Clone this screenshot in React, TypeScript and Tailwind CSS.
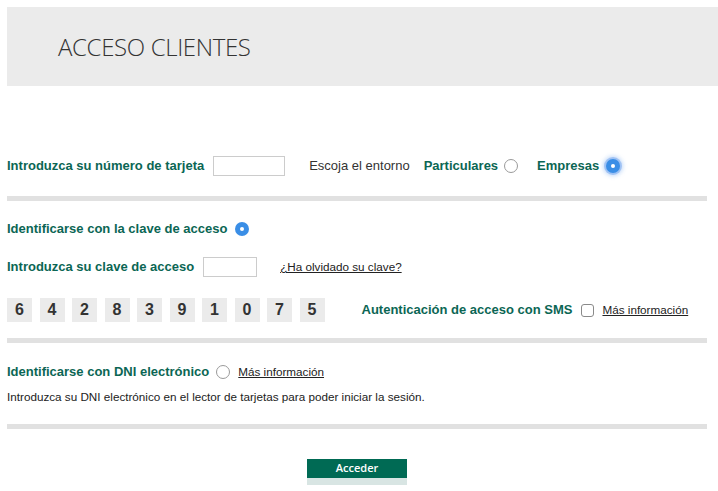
const green = "text-[#0b6654]";

function Radio({ checked, glow }: { checked?: boolean; glow?: boolean }) {
  if (checked) {
    return (
      <span
        className={`flex h-[14px] w-[14px] shrink-0 items-center justify-center rounded-full bg-[#3a8ee6] ${
          glow ? "shadow-[0_0_0_2px_rgba(120,170,240,0.55),0_0_4px_3px_rgba(120,170,240,0.45)]" : ""
        }`}
      >
        <span className="block h-[4px] w-[4px] rounded-full bg-white" />
      </span>
    );
  }
  return <span className="block h-[14px] w-[14px] shrink-0 rounded-full border border-[#9a9a9a] bg-white" />;
}

function Separator({ className = "" }: { className?: string }) {
  return <div className={`h-[5px] w-[700px] bg-[#e1e1e1] ${className}`} />;
}

const digits = ["6", "4", "2", "8", "3", "9", "1", "0", "7", "5"];

export default function App() {
  return (
    <div className="min-h-screen bg-white pl-[7px] pt-[7px] font-['Liberation_Sans',Arial,sans-serif] text-[#222]">
      {/* cabecera */}
      <div className="flex h-[79px] w-[711px] items-center bg-[#ebebeb] pl-[51px]">
        <h1 className="font-['Open_Sans',sans-serif] text-[24px] font-light tracking-[-0.35px] text-[#333]">
          ACCESO CLIENTES
        </h1>
      </div>

      <div className="w-[700px] text-[13px]">
        {/* tarjeta + entorno */}
        <div className="mt-[70px] flex h-[20px] items-center">
          <span className={`font-bold ${green}`}>Introduzca su número de tarjeta</span>
          <input className="ml-[9px] h-[20px] w-[72px] border border-[#cccccc] bg-white outline-none" />
          <span className="ml-[24px] text-[#333]">Escoja el entorno</span>
          <span className={`ml-[14px] font-bold ${green}`}>Particulares</span>
          <span className="ml-[6px] block">
            <Radio />
          </span>
          <span className={`ml-[19px] font-bold ${green}`}>Empresas</span>
          <span className="ml-[7px] block">
            <Radio checked glow />
          </span>
        </div>

        <Separator className="mt-[20px]" />

        {/* clave de acceso */}
        <div className="mt-[20px] flex h-[16px] items-center">
          <span className={`font-bold ${green}`}>Identificarse con la clave de acceso</span>
          <span className="ml-[8px] block">
            <Radio checked />
          </span>
        </div>

        <div className="mt-[20px] flex h-[20px] items-center">
          <span className={`font-bold ${green}`}>Introduzca su clave de acceso</span>
          <input className="ml-[9px] h-[20px] w-[54px] border border-[#cccccc] bg-white outline-none" />
          <a className="ml-[23px] text-[11.7px] text-[#222] underline">¿Ha olvidado su clave?</a>
        </div>

        <div className="mt-[21px] flex h-[24px] items-center">
          <div className="flex gap-[7.5px]">
            {digits.map((d) => (
              <span
                key={d}
                className="flex h-[24px] w-[25px] items-center justify-center bg-[#ebebeb] text-[16px] font-bold text-[#333]"
              >
                {d}
              </span>
            ))}
          </div>
          <span className={`ml-[37px] font-bold ${green}`}>Autenticación de acceso con SMS</span>
          <span className="ml-[9px] block h-[13px] w-[13px] rounded-[3px] border border-[#8a8a8a] bg-white" />
          <a className="ml-[8px] text-[11.7px] text-[#222] underline">Más información</a>
        </div>

        <Separator className="mt-[16px]" />

        {/* DNI electrónico */}
        <div className="mt-[21px] flex h-[16px] items-center">
          <span className={`font-bold ${green}`}>Identificarse con DNI electrónico</span>
          <span className="ml-[7px] block">
            <Radio />
          </span>
          <a className="ml-[8px] text-[11.7px] text-[#222] underline">Más información</a>
        </div>

        <p className="mt-[9px] h-[16px] text-[11.7px] leading-[16px] text-[#222]">
          Introduzca su DNI electrónico en el lector de tarjetas para poder iniciar la sesión.
        </p>

        <Separator className="mt-[19px]" />

        <div className="mt-[30px] flex justify-center">
          <button className="flex w-[100px] flex-col">
            <span className="flex h-[19px] items-center justify-center bg-[#006a54] font-['Open_Sans',sans-serif] text-[11px] font-semibold text-white">
              Acceder
            </span>
            <span className="h-[7px] bg-[#d8e5e3]" />
          </button>
        </div>
      </div>
    </div>
  );
}
